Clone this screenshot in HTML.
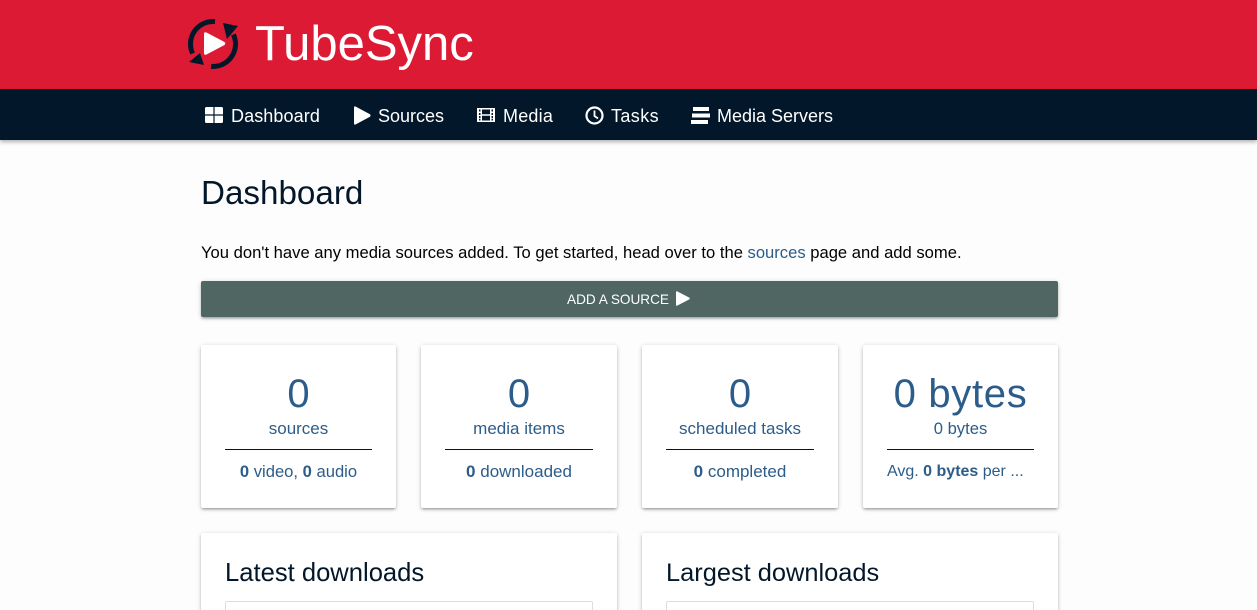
<!DOCTYPE html>
<html>
<head>
<meta charset="utf-8">
<style>
*{box-sizing:border-box}
html,body{margin:0;padding:0;width:1257px;height:610px;overflow:hidden;background:#fdfdfd}
#page{position:relative;width:1257px;height:610px;overflow:hidden;background:#fdfdfd;font-family:"Liberation Sans",sans-serif;color:#000}
.a{position:absolute;white-space:nowrap}
#hd{position:absolute;left:0;top:0;width:1257px;height:89px;background:#dd1a34}
#nav{position:absolute;left:0;top:89px;width:1257px;height:51px;background:#03172b;box-shadow:0 2px 4px rgba(0,0,0,.3)}
.n{position:absolute;top:106px;font-size:18px;line-height:21px;color:#fff;white-space:nowrap}
.card{position:absolute;background:#fff;border-radius:2px;box-shadow:0 2px 2px rgba(0,0,0,.14),0 3px 1px -2px rgba(0,0,0,.12),0 1px 5px rgba(0,0,0,.2)}
.c{position:absolute;text-align:center;color:#2c5c8a;white-space:nowrap}
.big{top:371px;font-size:40px;line-height:46px}
.mid{top:419px;font-size:17px;line-height:19px}
.low{top:462px;font-size:17px;line-height:19px}
.hr{position:absolute;top:449px;height:1px;background:#03172b}
</style>
</head>
<body>
<div id="page">
<div id="hd"></div>
<svg class="a" style="left:186px;top:17px" width="54" height="54" viewBox="0 0 54 54">
<path d="M29 4.600A22.500 22.500 0 0 0 6.600 36.500" fill="none" stroke="#03172b" stroke-width="5"/>
<path d="M25 49.400A22.500 22.500 0 0 0 47.400 17.500" fill="none" stroke="#03172b" stroke-width="5"/>
<path d="M3 45L14 36 18 48Z" fill="#03172b"/>
<path d="M37 6L52 9 41 22Z" fill="#03172b"/>
<path d="M18 17Q18 14.500 20.500 15.500L38.500 25Q40 26.500 38.500 28L20.500 37.500Q18 38.500 18 36Z" fill="#fff"/>
</svg>
<div class="a" style="left:255px;top:15px;font-size:49px;line-height:58px;color:#fff">TubeSync</div>
<div id="nav"></div>
<svg class="a" style="left:205px;top:107px" width="18" height="16" viewBox="0 0 18 16"><path d="M0 1.500Q0 0 1.500 0H8.400V7.400H0ZM9.600 0H16.500Q18 0 18 1.500V7.400H9.600ZM0 8.600H8.400V16H1.500Q0 16 0 14.500ZM9.600 8.600H18V14.500Q18 16 16.500 16H9.600Z" fill="#fff"/></svg>
<div class="n" style="left:231px;letter-spacing:.1px">Dashboard</div>
<svg class="a" style="left:354px;top:106px" width="17" height="19" viewBox="0 0 17 19"><path d="M0 1.500Q0 0 1.500 .5L16 8.300Q17 9.500 16 10.700L1.500 18.500Q0 19 0 17.500Z" fill="#fff"/></svg>
<div class="n" style="left:378px">Sources</div>
<svg class="a" style="left:477px;top:108px" width="18" height="14" viewBox="0 0 18 14"><path fill-rule="evenodd" d="M0 0H18V14H0ZM2 1.500V3.500H3.500V1.500ZM2 5V7H3.500V5ZM2 8V10H3.500V8ZM2 10.800V12.500H3.500V10.800ZM14.500 1.500V3.500H16V1.500ZM14.500 5V7H16V5ZM14.500 8V10H16V8ZM14.500 10.800V12.500H16V10.800ZM5 1.500V6.200H13V1.500ZM5 7.800V12.500H13V7.800Z" fill="#fff"/></svg>
<div class="n" style="left:503px;letter-spacing:.2px">Media</div>
<svg class="a" style="left:585px;top:106px" width="19" height="19" viewBox="0 0 19 19"><circle cx="9.500" cy="9.500" r="8" fill="none" stroke="#fff" stroke-width="2.200"/><path d="M9.500 4.500V10L13 12.500" fill="none" stroke="#fff" stroke-width="1.800"/></svg>
<div class="n" style="left:611px;letter-spacing:.4px">Tasks</div>
<svg class="a" style="left:691px;top:107px" width="19" height="17" viewBox="0 0 19 17"><path d="M2 0H18V4H2ZM1 6.500H19V10.500H1ZM0 13H17V17H0Z" fill="#fff"/></svg>
<div class="n" style="left:717px">Media Servers</div>

<div class="a" style="left:201px;top:175px;font-size:33.200px;line-height:38px;color:#03172b">Dashboard</div>
<div class="a" style="left:201px;top:243px;font-size:16.600px;line-height:19px">You don't have any media sources added. To get started, head over to the <span style="color:#2c5c8a">sources</span> page and add some.</div>

<div class="a" style="left:201px;top:281px;width:857px;height:36px;background:#4f6663;border-radius:2px;box-shadow:0 2px 2px rgba(0,0,0,.14),0 3px 1px -2px rgba(0,0,0,.12),0 1px 5px rgba(0,0,0,.2)"></div>
<div class="a" style="left:567px;top:291px;font-size:13.600px;line-height:18px;color:#fff">ADD A SOURCE</div>
<svg class="a" style="left:676px;top:291px" width="14" height="15" viewBox="0 0 14 15"><path d="M0 1Q0 0 1 .3L13.500 6.700Q14 7.500 13.500 8.300L1 14.700Q0 15 0 14Z" fill="#fff"/></svg>

<div class="card" style="left:201px;top:345px;width:195px;height:163px"></div>
<div class="card" style="left:421px;top:345px;width:196px;height:163px"></div>
<div class="card" style="left:642px;top:345px;width:196px;height:163px"></div>
<div class="card" style="left:863px;top:345px;width:195px;height:163px"></div>

<div class="c big" style="left:201px;width:195px">0</div>
<div class="c mid" style="left:201px;width:195px">sources</div>
<div class="hr" style="left:225px;width:147px"></div>
<div class="c low" style="left:201px;width:195px;font-size:16.600px"><b>0</b> video, <b>0</b> audio</div>

<div class="c big" style="left:421px;width:196px">0</div>
<div class="c mid" style="left:421px;width:196px">media items</div>
<div class="hr" style="left:445px;width:148px"></div>
<div class="c low" style="left:421px;width:196px"><b>0</b> downloaded</div>

<div class="c big" style="left:642px;width:196px">0</div>
<div class="c mid" style="left:642px;width:196px">scheduled tasks</div>
<div class="hr" style="left:666px;width:148px"></div>
<div class="c low" style="left:642px;width:196px"><b>0</b> completed</div>

<div class="c big" style="left:863px;width:195px;letter-spacing:.7px">0 bytes</div>
<div class="c mid" style="left:863px;width:195px;font-size:16.600px">0 bytes</div>
<div class="hr" style="left:887px;width:147px"></div>
<div class="c low" style="left:887px;text-align:left;font-size:16px">Avg. <b>0 bytes</b> per ...</div>

<div class="card" style="left:201px;top:533px;width:416px;height:90px"></div>
<div class="card" style="left:642px;top:533px;width:416px;height:90px"></div>
<div class="a" style="left:225px;top:558px;font-size:25.600px;line-height:30px;color:#03172b">Latest downloads</div>
<div class="a" style="left:666px;top:558px;font-size:25.400px;line-height:30px;color:#03172b">Largest downloads</div>
<div class="a" style="left:225px;top:601px;width:368px;height:20px;border:1px solid #ddd;border-radius:2px"></div>
<div class="a" style="left:666px;top:601px;width:368px;height:20px;border:1px solid #ddd;border-radius:2px"></div>
</div>
</body>
</html>
